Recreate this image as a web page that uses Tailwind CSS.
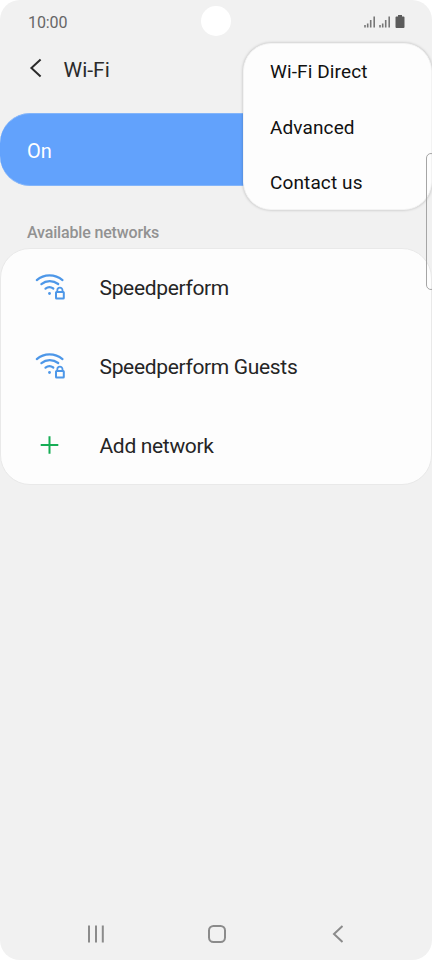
<!DOCTYPE html>
<html lang="en">
<head>
<meta charset="utf-8">
<title>Wi-Fi</title>
<script src="https://cdn.jsdelivr.net/npm/@tailwindcss/browser@4"></script>
</head>
<body class="bg-white">
<svg class="hidden">
  <symbol id="wifi-lock" viewBox="0 0 32 28">
    <g fill="none" stroke="#4d97e8" stroke-width="2.200" stroke-linecap="round" stroke-linejoin="round">
      <path d="M2.800 7.100C10 .7 21 .7 28.500 7.100M7.400 11.200C12.300 7.200 19 7.200 24.200 11M11.500 15.700C13.800 13.900 17 13.900 19.300 15.500"/>
      <rect x="22" y="19" width="7.800" height="6.500" rx=".6" stroke-width="2"/>
      <path d="M23.300 18.500V17.300a2.600 2.600 0 0 1 5.200 0v1.200" stroke-width="1.800"/>
    </g>
    <circle cx="15.500" cy="20.500" r="1.400" fill="#4d97e8"/>
  </symbol>
  <symbol id="signal" viewBox="0 0 12 12">
    <path d="M1 9v2.600M3.700 7.500v4.100M6.700 4v7.600M10.200 .6v11" stroke="#777" stroke-width="1.600" fill="none"/>
  </symbol>
</svg>
<main class="relative w-[432px] h-[960px] overflow-hidden rounded-[20px] bg-[#f1f1f1] font-[Roboto,sans-serif] flex flex-col">
  <header class="relative h-11 shrink-0 flex items-center justify-between pl-7 pr-[27px]">
    <span class="mt-[2px] text-[16px] leading-5 tracking-[-0.1px] text-[#666]">10:00</span>
    <div class="absolute left-[201px] top-[6px] size-[30px] rounded-full bg-white"></div>
    <div class="flex items-center gap-[3px]">
      <svg class="size-3"><use href="#signal"/></svg>
      <svg class="size-3"><use href="#signal"/></svg>
      <svg class="w-[10px] h-[13px] ml-[1px] -mt-[1px]" viewBox="0 0 10 13"><path d="M3 0h4v1.500h1.500q1 0 1 1v9.500q0 1-1 1h-7q-1 0-1-1V2.500q0-1 1-1H3z" fill="#5c5c5c"/></svg>
    </div>
  </header>
  <div class="h-[50px] shrink-0 flex items-center pl-[29px]">
    <svg class="w-[14px] h-5 -mt-[2px]" viewBox="0 0 14 20" fill="none" stroke="#2b2b2b" stroke-width="2"><path d="M11.600 1.500L2.400 10l9.200 8.500"/></svg>
    <h1 class="ml-[20.500px] mt-[2px] text-[21px] leading-6 text-[#2b2b2b]">Wi-Fi</h1>
  </div>
  <div class="mt-[19px] h-[73px] shrink-0 rounded-[30px] bg-[#62a2fc] border-y border-[#83b5fa] flex items-center pt-[2px] pl-[27px] text-[20px] text-white">On</div>
  <h2 class="mt-[37px] h-5 shrink-0 pl-[27px] text-[16px] leading-5 font-medium tracking-[-0.160px] text-[#929292]">Available networks</h2>
  <ul class="mt-[5px] h-[237px] shrink-0 rounded-[30px] bg-[#fdfdfd] border border-[#e9e9e9] text-[21px] tracking-[-0.330px] text-[#252525]">
    <li class="h-[79px] flex items-center pl-[33px]">
      <svg class="w-8 h-7 -mt-[3px]"><use href="#wifi-lock"/></svg><span class="ml-[33.500px]">Speedperform</span>
    </li>
    <li class="h-[79px] flex items-center pl-[33px]">
      <svg class="w-8 h-7 -mt-[3px]"><use href="#wifi-lock"/></svg><span class="ml-[33.500px]">Speedperform Guests</span>
    </li>
    <li class="h-[79px] flex items-center pl-[33px]">
      <svg class="w-8 h-7 -mt-[2px]" viewBox="0 0 32 28"><path d="M6.700 13h17.600M15.500 4.200v17.600" stroke="#16ad55" stroke-width="2"/></svg><span class="ml-[33.500px]">Add network</span>
    </li>
  </ul>
  <nav class="mt-auto h-[52px] shrink-0 flex items-center justify-between pl-[87px] pr-[88px] text-[#8b8b8b]">
    <svg class="w-[18px] h-[18px]" viewBox="0 0 18 18" stroke="currentColor" stroke-width="2"><path d="M2 .5v17M9 .5v17M15.800 .5v17"/></svg>
    <svg class="w-5 h-5 mr-[4px]" viewBox="0 0 20 20" fill="none" stroke="currentColor" stroke-width="2"><rect x="2" y="2" width="16" height="16" rx="4.500"/></svg>
    <svg class="w-3 h-[18px]" viewBox="0 0 12 18" fill="none" stroke="currentColor" stroke-width="2"><path d="M10.500 1L2 9l8.500 8"/></svg>
  </nav>
  <div class="absolute left-[243px] top-[43px] w-[189px] h-[167px] rounded-[28px] bg-[#fdfdfd] border border-[#f3f3f3] shadow-[0_0_3px_rgba(0,0,0,0.25)] pt-[1px] pl-[26px] text-[19px] tracking-[0.120px] text-[#111] flex flex-col">
    <div class="h-[55px] shrink-0 flex items-center">Wi-Fi Direct</div>
    <div class="h-[56px] shrink-0 flex items-center">Advanced</div>
    <div class="h-[55px] shrink-0 flex items-center">Contact us</div>
  </div>
  <div class="absolute left-[426px] top-[153px] w-[10px] h-[137px] rounded-[5px] border border-[#a5a5a5]"></div>
</main>
</body>
</html>
